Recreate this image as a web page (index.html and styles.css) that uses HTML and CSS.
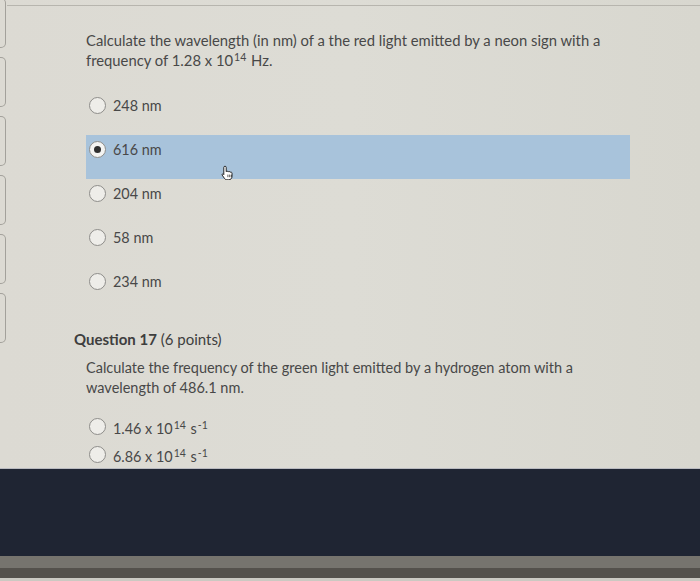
FILE: index.html
```html
<!DOCTYPE html>
<html>
<head>
<meta charset="utf-8">
<link rel="stylesheet" href="styles.css">
</head>
<body>
<div class="screen">
  <div class="page">
    <div class="rail">
      <div class="tab first"></div>
      <div class="tab"></div>
      <div class="tab"></div>
      <div class="tab"></div>
      <div class="tab"></div>
      <div class="tab"></div>
    </div>
    <div class="main">
      <div class="rule"></div>
      <div class="q1">
        <p class="qtext">Calculate the wavelength (in nm) of a the red light emitted by a neon sign with a frequency of 1.28 x 10<sup>14</sup> Hz.</p>
        <div class="options">
          <div class="opt"><span class="radio"></span><span class="label">248 nm</span></div>
          <div class="opt selected"><span class="radio on"></span><span class="label">616 nm</span>
            <svg class="cursor" width="13" height="15" viewBox="0 0 13 15">
              <path d="M4 1.2c.7 0 1.2.5 1.2 1.2v4.3c.2-.6 1.8-.7 2 .2.4-.6 1.8-.5 2 .4.5-.5 1.8-.2 1.8.9v3.2c0 1.9-1.3 3.4-3.2 3.4H6c-1.2 0-2-.6-2.7-1.6L1.2 10.1c-.5-.8.5-1.6 1.200-1l.4.5V2.4c0-.7.5-1.2 1.2-1.2z" fill="#fff" stroke="#111" stroke-width="0.9" stroke-linejoin="round"/>
              <path d="M6.9 9.6v2.6M8.7 9.6v2.6M10.3 9.8v2.4" stroke="#111" stroke-width="0.7"/>
            </svg>
          </div>
          <div class="opt"><span class="radio"></span><span class="label">204 nm</span></div>
          <div class="opt"><span class="radio"></span><span class="label">58 nm</span></div>
          <div class="opt"><span class="radio"></span><span class="label">234 nm</span></div>
        </div>
      </div>
      <div class="q2">
        <h2 class="qhead"><strong>Question 17</strong> (6 points)</h2>
        <div class="q2body">
          <p class="qtext tall">Calculate the frequency of the green light emitted by a hydrogen atom with a wavelength of 486.1 nm.</p>
          <div class="options small">
            <div class="opt short"><span class="radio"></span><span class="label">1.46 x 10<sup>14</sup> s<sup>-1</sup></span></div>
            <div class="opt short"><span class="radio"></span><span class="label">6.86 x 10<sup>14</sup> s<sup>-1</sup></span></div>
          </div>
        </div>
      </div>
    </div>
  </div>
  <div class="dark"></div>
  <div class="strip1"></div>
  <div class="strip2"></div>
  <div class="strip3"></div>
</div>
</body>
</html>
```

FILE: styles.css
```css
html, body {
  margin: 0;
  padding: 0;
}
body {
  width: 700px;
  height: 581px;
  overflow: hidden;
  background: #dad8d1;
  font-family: Lato, "Open Sans", sans-serif;
  color: #484848;
}
.screen {
  display: flex;
  flex-direction: column;
  height: 581px;
}
.page {
  height: 468px;
  flex: none;
  display: flex;
  background: linear-gradient(90deg, #dcdad3 0%, #dddcd5 50%, #d8d7cf 100%);
  overflow: hidden;
}
.rail {
  width: 7px;
  flex: none;
  display: flex;
  flex-direction: column;
  gap: 9px;
}
.tab {
  width: 5px;
  height: 48px;
  border: 1px solid #a3a19b;
  border-left: none;
  border-radius: 0 5px 5px 0;
  flex: none;
}
.tab.first {
  margin-top: -2px;
}
.main {
  flex: 1;
}
.rule {
  margin-top: 5px;
  border-top: 1px solid #b7b5ae;
}
.q1 {
  padding: 24px 0 0 79px;
}
.qtext {
  margin: 0;
  font-size: 14.8px;
  line-height: 20px;
  width: 560px;
}
.qtext.tall {
  font-size: 14.5px;
  line-height: 20px;
  width: 520px;
}
sup {
  font-size: 10.5px;
  line-height: 0;
  vertical-align: 5px;
  margin: 0 1px;
}
.options {
  margin-top: 21px;
  width: 544px;
}
.opt {
  position: relative;
  height: 44px;
  box-sizing: border-box;
  padding: 6px 0 0 3px;
  display: flex;
  align-items: flex-start;
  gap: 7px;
}
.opt .label {
  font-size: 14.4px;
  line-height: 17px;
  height: 17px;
}
.opt.selected {
  background: #a8c3db;
}
.radio {
  width: 15px;
  height: 15px;
  flex: none;
  border: 1px solid #8e8d8a;
  border-radius: 50%;
  background: #eeede9;
  position: relative;
}
.radio.on {
  background: #f4f4f2;
}
.radio.on::after {
  content: "";
  position: absolute;
  left: 4px;
  top: 4px;
  width: 7px;
  height: 7px;
  border-radius: 50%;
  background: #303030;
}
.cursor {
  position: absolute;
  left: 135px;
  top: 30px;
}
.q2 {
  margin-top: 18px;
  padding-left: 67px;
}
.qhead {
  margin: 0;
  font-size: 15px;
  line-height: 20px;
  font-weight: 400;
  color: #3e3e3e;
}
.qhead strong {
  font-weight: 700;
}
.q2body {
  margin-top: 9px;
  padding-left: 12px;
}
.options.small {
  margin-top: 14px;
}
.opt.short {
  height: 28px;
  padding-top: 6px;
  gap: 7px;
}
.opt.short .label {
  font-size: 14.4px;
  padding-top: 2px;
}
.dark {
  height: 88px;
  flex: none;
  background: #1f2533;
  border-top: 1px solid #b9bac0;
  box-sizing: border-box;
}
.strip1 {
  height: 12px;
  flex: none;
  background: #76746e;
}
.strip2 {
  height: 10px;
  flex: none;
  background: #54514c;
}
.strip3 {
  flex: 1;
  background: #cbc9c2;
}
```
